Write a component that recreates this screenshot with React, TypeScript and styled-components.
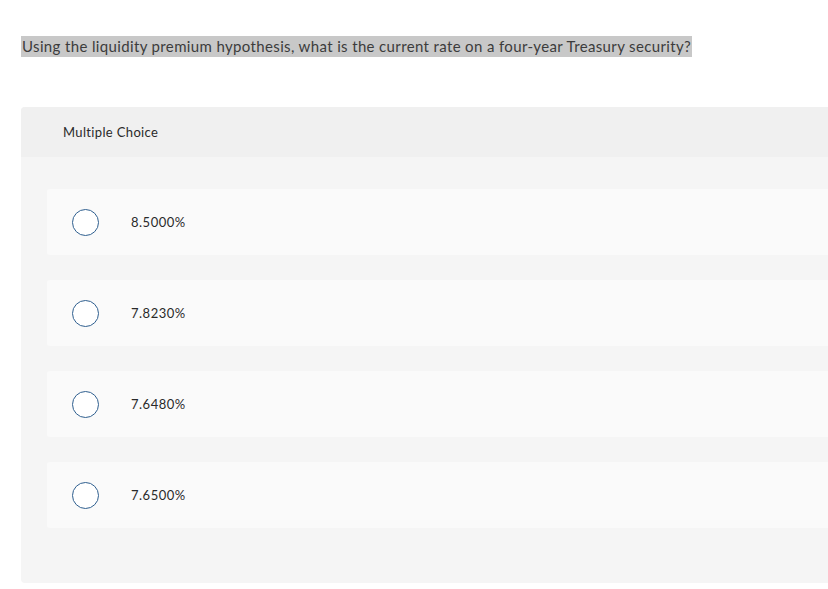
import React from 'react';
import styled, { createGlobalStyle } from 'styled-components';

const GlobalStyle = createGlobalStyle`
    html, body {
        margin: 0;
        padding: 0;
        background: #ffffff;
        overflow: hidden;
    }
    body {
        font-family: Lato, "Open Sans", Arial, sans-serif;
        color: #333333;
    }
`;

const Page = styled.div`
    width: 828px;
    height: 589px;
    overflow: hidden;
    padding: 36px 0 0 21px;
    box-sizing: border-box;
`;

const Prompt = styled.p`
    margin: 0;
    font-size: 15px;
    line-height: 21px;
    letter-spacing: 0.36px;
`;

const Highlight = styled.span`
    display: inline-block;
    background: #c8c8c8;
    color: #3c3c3c;
    padding: 0 1px 0 1px;
`;

const Card = styled.section`
    margin-top: 50px;
    width: 830px;
    background: #f5f5f5;
    border-radius: 4px;
    padding-bottom: 55px;
`;

const CardHeader = styled.div`
    height: 50px;
    background: #f0f0f0;
    border-radius: 4px 4px 0 0;
    display: flex;
    align-items: center;
    padding-left: 42px;
    font-size: 13px;
    letter-spacing: 0.35px;
    color: #2a2a2a;
`;

const OptionList = styled.ul`
    list-style: none;
    margin: 0;
    padding: 32px 0 0 26px;
    display: flex;
    flex-direction: column;
    gap: 25px;
`;

const Option = styled.li`
    height: 66px;
    background: #fafafa;
    border-radius: 3px;
    display: flex;
    align-items: center;
    padding-left: 25px;
`;

const Radio = styled.span`
    width: 25px;
    height: 25px;
    border-radius: 50%;
    border: 1.5px solid #2f5f8f;
    background: #ffffff;
    flex: 0 0 auto;
`;

const OptionText = styled.span`
    margin-left: 32px;
    font-size: 13px;
    letter-spacing: 0.5px;
    color: #2a2a2a;
`;

const choices = ['8.5000%', '7.8230%', '7.6480%', '7.6500%'];

export default function App() {
    return (
        <>
            <GlobalStyle />
            <Page>
                <Prompt>
                    <Highlight>
                        Using the liquidity premium hypothesis, what is the current rate on a four-year Treasury security?
                    </Highlight>
                </Prompt>
                <Card>
                    <CardHeader>Multiple Choice</CardHeader>
                    <OptionList>
                        {choices.map((c) => (
                            <Option key={c}>
                                <Radio />
                                <OptionText>{c}</OptionText>
                            </Option>
                        ))}
                    </OptionList>
                </Card>
            </Page>
        </>
    );
}
